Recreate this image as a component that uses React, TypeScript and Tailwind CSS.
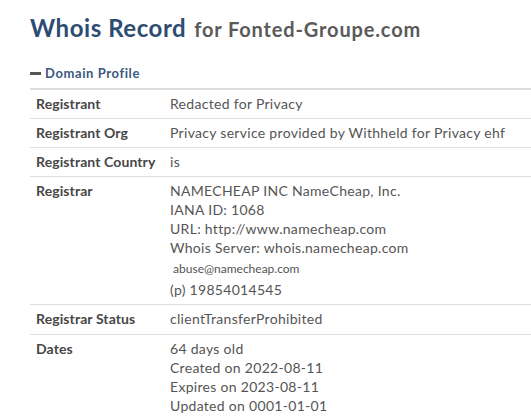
const rows: { label: string; lines: { text: string; small?: boolean }[]; pad?: string }[] = [
  { label: "Registrant", lines: [{ text: "Redacted for Privacy" }] },
  {
    label: "Registrant Org",
    lines: [{ text: "Privacy service provided by Withheld for Privacy ehf" }],
  },
  { label: "Registrant Country", lines: [{ text: "is" }] },
  {
    label: "Registrar",
    lines: [
      { text: "NAMECHEAP INC NameCheap, Inc." },
      { text: "IANA ID: 1068" },
      { text: "URL: http://www.namecheap.com" },
      { text: "Whois Server: whois.namecheap.com" },
      { text: "\u00a0abuse@namecheap.com", small: true },
      { text: "(p) 19854014545" },
    ],
  },
  { label: "Registrar Status", lines: [{ text: "clientTransferProhibited" }], pad: "pb-[6px]" },
  {
    label: "Dates",
    lines: [
      { text: "64 days old" },
      { text: "Created on 2022-08-11" },
      { text: "Expires on 2023-08-11" },
      { text: "Updated on 0001-01-01" },
    ],
  },
];

export default function App() {
  return (
    <div className="min-h-screen bg-white font-['Lato',sans-serif] pl-[30px] pt-[12px] overflow-hidden">
      {/* Title */}
      <h1 className="flex items-baseline gap-[8px] whitespace-nowrap leading-[32px]">
        <span className="text-[24px] font-bold tracking-[0.55px] text-[#2e4b72]">Whois Record</span>
        <span className="text-[20px] font-bold tracking-[0.85px] text-[#5a5a5a]">for Fonted-Groupe.com</span>
      </h1>

      {/* Section header */}
      <div className="mt-[19px] flex items-center gap-[4px] text-[13px] font-bold tracking-[0.6px] text-[#3b5880] leading-[18px]">
        <span className="block w-[11px] h-[3px] bg-[#555]" />
        <span>Domain Profile</span>
      </div>

      {/* Table */}
      <div className="mt-[6px] border-t-2 border-[#dcdcdc] w-[520px]">
        {rows.map((row, i) => (
          <div
            key={i}
            className={`flex border-b border-[#dedede] pt-[4px] ${row.pad ?? "pb-[5px]"} text-[14px] leading-[19px]`}
          >
            <div className="w-[140px] shrink-0 pl-[6px] font-bold tracking-[0.1px] text-[#474747] whitespace-nowrap">
              {row.label}
            </div>
            <div className="text-[#555] tracking-[0.3px] whitespace-nowrap">
              {row.lines.map((l, j) => (
                <div key={j} className={l.small ? "text-[12px] leading-[23px] tracking-normal" : ""}>
                  {l.text}
                </div>
              ))}
            </div>
          </div>
        ))}
      </div>
    </div>
  );
}
